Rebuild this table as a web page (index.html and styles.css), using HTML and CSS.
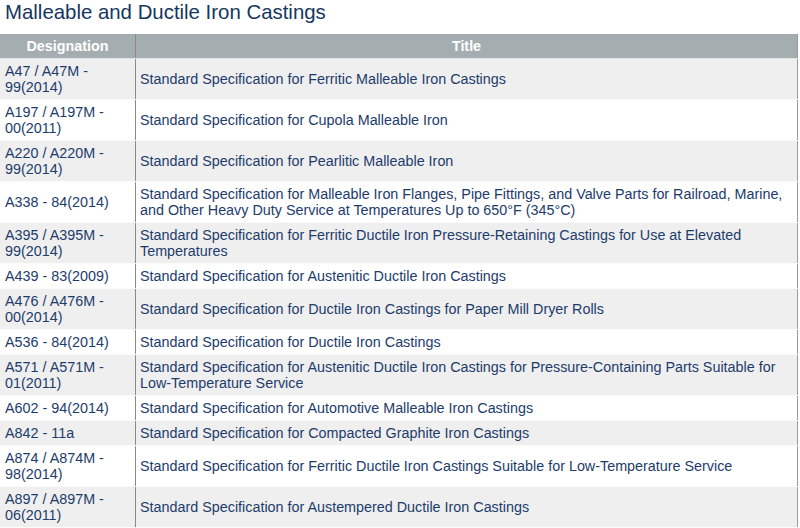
FILE: index.html
```html
<!DOCTYPE html>
<html>
<head>
<meta charset="utf-8">
<link rel="stylesheet" href="styles.css">
</head>
<body>
<h1 class="page-title">Malleable and Ductile Iron Castings</h1>
<table class="spec-table">
  <thead>
    <tr><th class="col-des">Designation</th><th class="col-title">Title</th></tr>
  </thead>
  <tbody>
    <tr><td>A47 / A47M -<br>99(2014)</td><td>Standard Specification for Ferritic Malleable Iron Castings</td></tr>
    <tr><td>A197 / A197M -<br>00(2011)</td><td>Standard Specification for Cupola Malleable Iron</td></tr>
    <tr><td>A220 / A220M -<br>99(2014)</td><td>Standard Specification for Pearlitic Malleable Iron</td></tr>
    <tr><td>A338 - 84(2014)</td><td>Standard Specification for Malleable Iron Flanges, Pipe Fittings, and Valve Parts for Railroad, Marine, and Other Heavy Duty Service at Temperatures Up to 650°F (345°C)</td></tr>
    <tr><td>A395 / A395M -<br>99(2014)</td><td>Standard Specification for Ferritic Ductile Iron Pressure-Retaining Castings for Use at Elevated Temperatures</td></tr>
    <tr><td>A439 - 83(2009)</td><td>Standard Specification for Austenitic Ductile Iron Castings</td></tr>
    <tr><td>A476 / A476M -<br>00(2014)</td><td>Standard Specification for Ductile Iron Castings for Paper Mill Dryer Rolls</td></tr>
    <tr><td>A536 - 84(2014)</td><td>Standard Specification for Ductile Iron Castings</td></tr>
    <tr><td>A571 / A571M -<br>01(2011)</td><td>Standard Specification for Austenitic Ductile Iron Castings for Pressure-Containing Parts Suitable for Low-Temperature Service</td></tr>
    <tr><td>A602 - 94(2014)</td><td>Standard Specification for Automotive Malleable Iron Castings</td></tr>
    <tr><td>A842 - 11a</td><td>Standard Specification for Compacted Graphite Iron Castings</td></tr>
    <tr><td>A874 / A874M -<br>98(2014)</td><td>Standard Specification for Ferritic Ductile Iron Castings Suitable for Low-Temperature Service</td></tr>
    <tr><td>A897 / A897M -<br>06(2011)</td><td>Standard Specification for Austempered Ductile Iron Castings</td></tr>
  </tbody>
</table>
</body>
</html>
```

FILE: styles.css
```css
html, body {
  margin: 0;
  padding: 0;
  background: #ffffff;
}
body {
  font-family: "Liberation Sans", Arial, sans-serif;
  color: #1d3c6c;
  overflow: hidden;
}
.page-title {
  margin: 1px 0 10px 5px;
  font-size: 20.4px;
  font-weight: normal;
  line-height: 23px;
  color: #16365f;
}
.spec-table {
  width: 798px;
  border-collapse: collapse;
  font-size: 14.35px;
  line-height: 16px;
  border-right: 1px solid #9a9a9a;
}
.spec-table th {
  background: #a4adb0;
  color: #ffffff;
  font-weight: bold;
  text-align: center;
  height: 24px;
  padding: 0 4px;
  border-bottom: 1px solid #dfe3e4;
}
.spec-table .col-des {
  width: 127px;
  border-right: 1px solid #8a8a8a;
}
.spec-table td {
  padding: 4px 4px 4px 4px;
  vertical-align: middle;
  border-bottom: 1px solid #fafafa;
}
.spec-table td:first-child {
  padding-left: 5px;
  border-right: 1px solid #8a8a8a;
}
.spec-table tbody tr:nth-child(odd) td {
  background: #efefef;
}
.spec-table tbody tr:nth-child(even) td {
  background: #ffffff;
}
```
